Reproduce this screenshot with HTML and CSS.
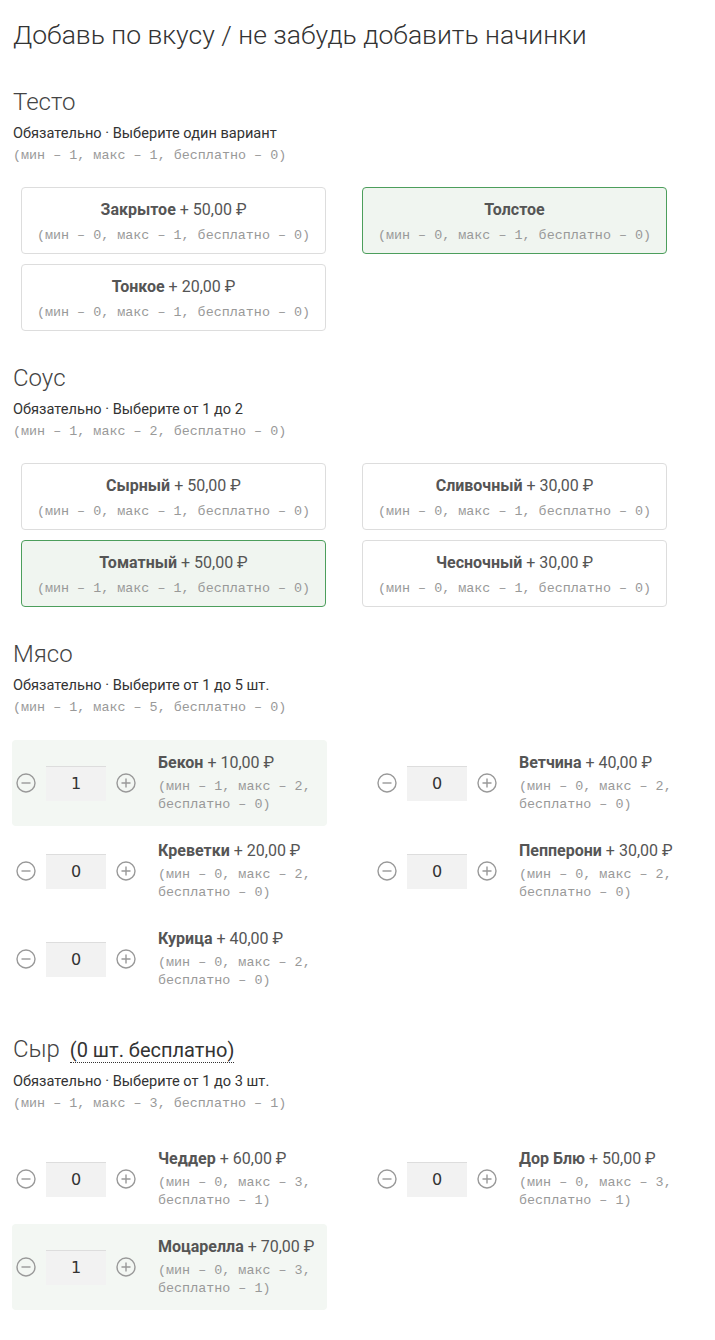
FILE: index.html
```html
<!doctype html>
<html lang="ru">
<head>
  <meta charset="UTF-8">
  <meta name="viewport" content="width=device-width, initial-scale=1.0">
  <title>Начинки</title>
  <link rel="stylesheet" href="styles.css">
</head>
<body>
  <h1 class="page-title">Добавь по вкусу / не забудь добавить начинки</h1>

  <section class="group">
    <h2 class="group-title">Тесто</h2>
    <p class="group-rule">Обязательно · Выберите один вариант</p>
    <p class="limits">(мин – 1, макс – 1, бесплатно – 0)</p>
    <div class="options">
      <div class="option"><p class="option-name"><b>Закрытое</b> + 50,00 ₽</p><p class="limits">(мин – 0, макс – 1, бесплатно – 0)</p></div>
      <div class="option selected"><p class="option-name"><b>Толстое</b></p><p class="limits">(мин – 0, макс – 1, бесплатно – 0)</p></div>
      <div class="option"><p class="option-name"><b>Тонкое</b> + 20,00 ₽</p><p class="limits">(мин – 0, макс – 1, бесплатно – 0)</p></div>
    </div>
  </section>

  <section class="group">
    <h2 class="group-title">Соус</h2>
    <p class="group-rule">Обязательно · Выберите от 1 до 2</p>
    <p class="limits">(мин – 1, макс – 2, бесплатно – 0)</p>
    <div class="options">
      <div class="option"><p class="option-name"><b>Сырный</b> + 50,00 ₽</p><p class="limits">(мин – 0, макс – 1, бесплатно – 0)</p></div>
      <div class="option"><p class="option-name"><b>Сливочный</b> + 30,00 ₽</p><p class="limits">(мин – 0, макс – 1, бесплатно – 0)</p></div>
      <div class="option selected"><p class="option-name"><b>Томатный</b> + 50,00 ₽</p><p class="limits">(мин – 1, макс – 1, бесплатно – 0)</p></div>
      <div class="option"><p class="option-name"><b>Чесночный</b> + 30,00 ₽</p><p class="limits">(мин – 0, макс – 1, бесплатно – 0)</p></div>
    </div>
  </section>

  <section class="group">
    <h2 class="group-title">Мясо</h2>
    <p class="group-rule">Обязательно · Выберите от 1 до 5 шт.</p>
    <p class="limits">(мин – 1, макс – 5, бесплатно – 0)</p>
    <div class="counters">
      <div class="counter selected">
        <div class="stepper">
          <button class="step"><svg viewBox="0 0 20 20"><circle cx="10" cy="10" r="9"/><path d="M5.5 10h9"/></svg></button>
          <input class="qty" type="text" value="1">
          <button class="step"><svg viewBox="0 0 20 20"><circle cx="10" cy="10" r="9"/><path d="M5.5 10h9M10 5.5v9"/></svg></button>
        </div>
        <div class="counter-info"><p class="option-name"><b>Бекон</b> + 10,00 ₽</p><p class="limits">(мин – 1, макс – 2, бесплатно – 0)</p></div>
      </div>
      <div class="counter">
        <div class="stepper">
          <button class="step"><svg viewBox="0 0 20 20"><circle cx="10" cy="10" r="9"/><path d="M5.5 10h9"/></svg></button>
          <input class="qty" type="text" value="0">
          <button class="step"><svg viewBox="0 0 20 20"><circle cx="10" cy="10" r="9"/><path d="M5.5 10h9M10 5.5v9"/></svg></button>
        </div>
        <div class="counter-info"><p class="option-name"><b>Ветчина</b> + 40,00 ₽</p><p class="limits">(мин – 0, макс – 2, бесплатно – 0)</p></div>
      </div>
      <div class="counter">
        <div class="stepper">
          <button class="step"><svg viewBox="0 0 20 20"><circle cx="10" cy="10" r="9"/><path d="M5.5 10h9"/></svg></button>
          <input class="qty" type="text" value="0">
          <button class="step"><svg viewBox="0 0 20 20"><circle cx="10" cy="10" r="9"/><path d="M5.5 10h9M10 5.5v9"/></svg></button>
        </div>
        <div class="counter-info"><p class="option-name"><b>Креветки</b> + 20,00 ₽</p><p class="limits">(мин – 0, макс – 2, бесплатно – 0)</p></div>
      </div>
      <div class="counter">
        <div class="stepper">
          <button class="step"><svg viewBox="0 0 20 20"><circle cx="10" cy="10" r="9"/><path d="M5.5 10h9"/></svg></button>
          <input class="qty" type="text" value="0">
          <button class="step"><svg viewBox="0 0 20 20"><circle cx="10" cy="10" r="9"/><path d="M5.5 10h9M10 5.5v9"/></svg></button>
        </div>
        <div class="counter-info"><p class="option-name"><b>Пепперони</b> + 30,00 ₽</p><p class="limits">(мин – 0, макс – 2, бесплатно – 0)</p></div>
      </div>
      <div class="counter">
        <div class="stepper">
          <button class="step"><svg viewBox="0 0 20 20"><circle cx="10" cy="10" r="9"/><path d="M5.5 10h9"/></svg></button>
          <input class="qty" type="text" value="0">
          <button class="step"><svg viewBox="0 0 20 20"><circle cx="10" cy="10" r="9"/><path d="M5.5 10h9M10 5.5v9"/></svg></button>
        </div>
        <div class="counter-info"><p class="option-name"><b>Курица</b> + 40,00 ₽</p><p class="limits">(мин – 0, макс – 2, бесплатно – 0)</p></div>
      </div>
    </div>
  </section>

  <section class="group">
    <h2 class="group-title">Сыр <span class="free-note">(0 шт. бесплатно)</span></h2>
    <p class="group-rule">Обязательно · Выберите от 1 до 3 шт.</p>
    <p class="limits">(мин – 1, макс – 3, бесплатно – 1)</p>
    <div class="counters">
      <div class="counter">
        <div class="stepper">
          <button class="step"><svg viewBox="0 0 20 20"><circle cx="10" cy="10" r="9"/><path d="M5.5 10h9"/></svg></button>
          <input class="qty" type="text" value="0">
          <button class="step"><svg viewBox="0 0 20 20"><circle cx="10" cy="10" r="9"/><path d="M5.5 10h9M10 5.5v9"/></svg></button>
        </div>
        <div class="counter-info"><p class="option-name"><b>Чеддер</b> + 60,00 ₽</p><p class="limits">(мин – 0, макс – 3, бесплатно – 1)</p></div>
      </div>
      <div class="counter">
        <div class="stepper">
          <button class="step"><svg viewBox="0 0 20 20"><circle cx="10" cy="10" r="9"/><path d="M5.5 10h9"/></svg></button>
          <input class="qty" type="text" value="0">
          <button class="step"><svg viewBox="0 0 20 20"><circle cx="10" cy="10" r="9"/><path d="M5.5 10h9M10 5.5v9"/></svg></button>
        </div>
        <div class="counter-info"><p class="option-name"><b>Дор Блю</b> + 50,00 ₽</p><p class="limits">(мин – 0, макс – 3, бесплатно – 1)</p></div>
      </div>
      <div class="counter selected">
        <div class="stepper">
          <button class="step"><svg viewBox="0 0 20 20"><circle cx="10" cy="10" r="9"/><path d="M5.5 10h9"/></svg></button>
          <input class="qty" type="text" value="1">
          <button class="step"><svg viewBox="0 0 20 20"><circle cx="10" cy="10" r="9"/><path d="M5.5 10h9M10 5.5v9"/></svg></button>
        </div>
        <div class="counter-info"><p class="option-name"><b>Моцарелла</b> + 70,00 ₽</p><p class="limits">(мин – 0, макс – 3, бесплатно – 1)</p></div>
      </div>
    </div>
  </section>
</body>
</html>
```

FILE: styles.css
```css
* {
    margin: 0;
    padding: 0;
    box-sizing: border-box;
}

body {
    font-family: Roboto, "Noto Sans", sans-serif;
    color: #333;
    background-color: #fff;
    padding: 18px 13px 20px 13px;
}

.page-title {
    font-size: 26.5px;
    font-weight: 300;
    line-height: 34px;
    color: #333;
    margin-bottom: 35px;
}

.group + .group {
    margin-top: 32px;
}

.group-title {
    font-size: 24px;
    font-weight: 300;
    line-height: 30px;
    color: #444;
    margin-bottom: 6px;
}

.free-note {
    font-size: 20px;
    font-weight: 400;
    color: #333;
    margin-left: 4px;
    border-bottom: 1px dotted #333;
}

.group-rule {
    font-size: 14.6px;
    line-height: 20px;
    color: #333;
    margin-bottom: 2px;
}

.limits {
    font-family: "Liberation Mono", monospace;
    font-size: 13.4px;
    line-height: 18px;
    color: #999;
}

.group > .limits {
    line-height: 22px;
}

.options {
    display: grid;
    grid-template-columns: 305px 305px;
    column-gap: 36px;
    row-gap: 10px;
    padding-left: 8px;
    margin-top: 20px;
}

.option {
    border: 1px solid #ddd;
    border-radius: 4px;
    padding: 11px 8px 8px 8px;
    text-align: center;
}

.option .limits {
    margin-top: 6px;
}

.option.selected {
    background-color: #f0f5f0;
    border-color: #4c9e5c;
}

.option-name {
    font-size: 16px;
    line-height: 22px;
    color: #555;
}

.option-name b {
    font-weight: 700;
}

.counters {
    display: grid;
    grid-template-columns: 315px 315px;
    column-gap: 46px;
    row-gap: 2px;
    margin-left: -1px;
    margin-top: 21px;
}

.counter {
    display: flex;
    align-items: center;
    gap: 22px;
    padding: 12px 12px 12px 4px;
    border-radius: 4px;
}

.counter.selected {
    background-color: #f3f7f3;
}

.stepper {
    display: flex;
    align-items: center;
    gap: 10px;
}

.step {
    width: 20px;
    height: 20px;
    border: none;
    background: none;
    display: flex;
}

.step svg {
    width: 20px;
    height: 20px;
    fill: none;
    stroke: #999;
    stroke-width: 1.4;
}

.qty {
    width: 60px;
    height: 35px;
    border: none;
    border-top: 1px solid #ddd;
    background-color: #f2f2f2;
    text-align: center;
    font-family: "DejaVu Sans", sans-serif;
    font-size: 16px;
    color: #333;
}

.counter-info {
    width: 160px;
}

.counter-info .limits {
    margin-top: 4px;
}
```
